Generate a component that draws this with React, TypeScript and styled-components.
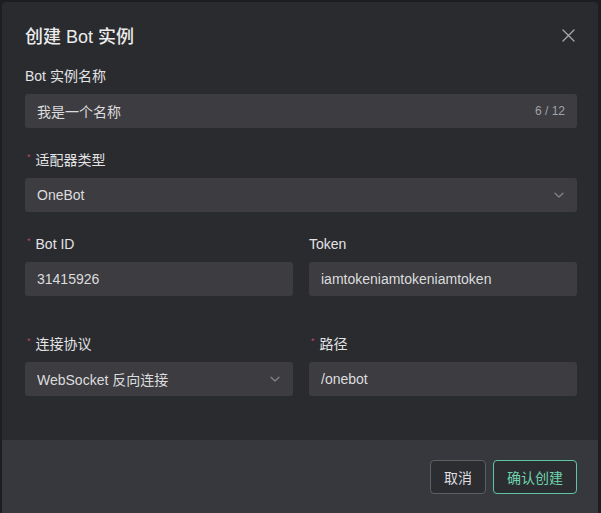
import React from "react";
import styled, { createGlobalStyle } from "styled-components";

const GlobalStyle = createGlobalStyle`
  html, body {
    margin: 0;
    padding: 0;
    background: #1d1e22;
    overflow: hidden;
  }
  body {
    font-family: "Liberation Sans", "Noto Sans CJK SC", sans-serif;
    -webkit-font-smoothing: antialiased;
  }
`;

const Page = styled.div`
  width: 601px;
  height: 513px;
  padding: 2px 3px 0 2px;
  box-sizing: border-box;
`;

const Modal = styled.div`
  background: #2a2b2f;
  border-radius: 4px 4px 0 0;
  height: 100%;
  display: flex;
  flex-direction: column;
`;

const Header = styled.div`
  display: flex;
  align-items: center;
  justify-content: space-between;
  padding: 20px 23px 0 23px;
  height: 26px;
`;

const Title = styled.h2`
  margin: 0;
  font-size: 18px;
  font-weight: 500;
  color: #ececec;
`;

const CloseButton = styled.button`
  background: none;
  border: 0;
  padding: 0;
  width: 14px;
  height: 14px;
  display: flex;
  align-items: center;
  justify-content: center;
  color: #a7a8ac;
  cursor: pointer;
`;

const Body = styled.div`
  padding: 18px 21px 0 23px;
  flex: 1;
`;

const Row = styled.div<{ $gap?: number }>`
  display: grid;
  grid-template-columns: 1fr 1fr;
  column-gap: 16px;
  margin-bottom: ${(p) => p.$gap ?? 22}px;
`;

const Item = styled.div<{ $gap?: number }>`
  margin-bottom: ${(p) => p.$gap ?? 22}px;
`;

const Label = styled.div`
  height: 20px;
  line-height: 20px;
  margin-bottom: 8px;
  font-size: 14px;
  color: #e3e3e5;
  display: flex;
  align-items: center;
`;

const Required = styled.span`
  color: #b4485d;
  font-size: 9px;
  margin: 0 5px 0 2px;
  position: relative;
  top: -3px;
`;

const Field = styled.div`
  height: 34px;
  background: #3c3c41;
  border-radius: 3px;
  display: flex;
  align-items: center;
  padding: 0 12px;
  font-size: 14px;
  color: #dcdcde;
`;

const FieldText = styled.span`
  flex: 1;
  white-space: nowrap;
  overflow: hidden;
`;

const Counter = styled.span`
  font-size: 12px;
  color: #a2a3a7;
`;

const Chevron = styled.svg`
  color: #85868a;
  flex: none;
`;

const Footer = styled.div`
  background: #37383d;
  padding: 20px 21px 19px 0;
  display: flex;
  justify-content: flex-end;
  gap: 7px;
`;

const Button = styled.button<{ $primary?: boolean }>`
  height: 34px;
  padding: 0 13px;
  border-radius: 4px;
  background: #2c2d31;
  border: 1px solid ${(p) => (p.$primary ? "#5fc5a1" : "#5e5f63")};
  color: ${(p) => (p.$primary ? "#6fd3ae" : "#dedee0")};
  font-family: inherit;
  font-size: 14px;
  cursor: pointer;
`;

const ChevronDown = () => (
  <Chevron width="12" height="12" viewBox="0 0 12 12" fill="none">
    <path d="M2 4.2 6 8l4-3.8" stroke="currentColor" strokeWidth="1.2" strokeLinecap="round" strokeLinejoin="round" />
  </Chevron>
);

const FormLabel: React.FC<{ required?: boolean; children: React.ReactNode }> = ({ required, children }) => (
  <Label>
    {required && <Required>*</Required>}
    {children}
  </Label>
);

export default function App() {
  return (
    <>
      <GlobalStyle />
      <Page>
        <Modal>
          <Header>
            <Title>创建 Bot 实例</Title>
            <CloseButton aria-label="close">
              <svg width="13" height="13" viewBox="0 0 13 13">
                <path d="M1 1l11 11M12 1 1 12" stroke="currentColor" strokeWidth="1.3" strokeLinecap="round" />
              </svg>
            </CloseButton>
          </Header>
          <Body>
            <Item>
              <FormLabel>Bot 实例名称</FormLabel>
              <Field>
                <FieldText>我是一个名称</FieldText>
                <Counter>6 / 12</Counter>
              </Field>
            </Item>
            <Item>
              <FormLabel required>适配器类型</FormLabel>
              <Field>
                <FieldText>OneBot</FieldText>
                <ChevronDown />
              </Field>
            </Item>
            <Row $gap={38}>
              <div>
                <FormLabel required>Bot ID</FormLabel>
                <Field>
                  <FieldText>31415926</FieldText>
                </Field>
              </div>
              <div>
                <FormLabel>Token</FormLabel>
                <Field>
                  <FieldText>iamtokeniamtokeniamtoken</FieldText>
                </Field>
              </div>
            </Row>
            <Row $gap={0}>
              <div>
                <FormLabel required>连接协议</FormLabel>
                <Field>
                  <FieldText>WebSocket 反向连接</FieldText>
                  <ChevronDown />
                </Field>
              </div>
              <div>
                <FormLabel required>路径</FormLabel>
                <Field>
                  <FieldText>/onebot</FieldText>
                </Field>
              </div>
            </Row>
          </Body>
          <Footer>
            <Button>取消</Button>
            <Button $primary>确认创建</Button>
          </Footer>
        </Modal>
      </Page>
    </>
  );
}
